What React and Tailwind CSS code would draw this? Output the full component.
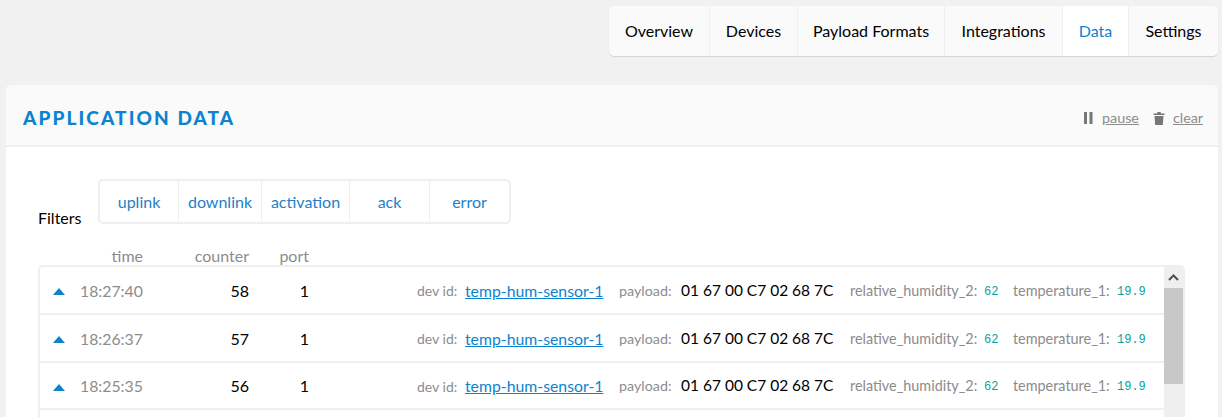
const tabs = [["Overview", "w-[101px]"], ["Devices", "w-[88px]"], ["Payload Formats", "w-[147px]"], ["Integrations", "w-[118px]"], ["Data", "w-[66px]"], ["Settings", "w-[89px]"]];
const filters = [["uplink", "w-[79px]"], ["downlink", "w-[83px]"], ["activation", "w-[88px]"], ["ack", "w-[80px]"], ["error", "flex-1"]];
const rows = [["18:27:40", "58"], ["18:26:37", "57"], ["18:25:35", "56"]];

function Row({ time, counter, h }) {
  return (
    <div className={`flex items-center border-b-2 border-[#efefef] pt-[1px] ${h}`}>
      <svg width="12" height="7" viewBox="0 0 12 7" className="ml-[13px] mr-[15px] mt-[2px] shrink-0">
        <path d="M6 0 L12 7 L0 7 Z" fill="#0d83d0" />
      </svg>
      <span className="w-[75px] text-[15.8px] text-[#8c8c8c]">{time}</span>
      <span className="w-[94px] text-right text-[16px] text-black">{counter}</span>
      <span className="w-[60px] text-right text-[16px] text-black">1</span>
      <div className="ml-[108px] flex items-center whitespace-nowrap">
        <span className="w-[48px] text-[14px] text-[#8c8c8c]">dev id:</span>
        <a className="w-[154px] text-[15.8px] text-[#0d83d0] underline">temp-hum-sensor-1</a>
        <span className="w-[62px] text-[14.3px] text-[#8c8c8c]">payload:</span>
        <span className="w-[169px] text-[15.5px] text-black">01 67 00 C7 02 68 7C</span>
        <span className="w-[134px] text-[14.4px] text-[#8c8c8c]">relative_humidity_2:</span>
        <span className="w-[29px] pt-[2px] font-['Liberation_Mono',monospace] text-[12px] text-[#0a9f9f]">62</span>
        <span className="w-[104px] text-[14.4px] text-[#8c8c8c]">temperature_1:</span>
        <span className="pt-[2px] font-['Liberation_Mono',monospace] text-[12px] text-[#0a9f9f]">19.9</span>
      </div>
    </div>
  );
}

export default function App() {
  return (
    <div className="h-[417px] overflow-hidden bg-[#f1f1f1] font-['Lato',sans-serif]">
      <div className="flex justify-end pt-[6px] pr-[4px]">
        <div className="flex h-[50px] overflow-hidden rounded-[5px] bg-[#fafafa] shadow-[0_1px_1px_rgba(0,0,0,0.12)]">
          {tabs.map(([t, w], i) => (
            <div key={t} className={`flex items-center justify-center text-[16px] ${w} ${i < 5 ? "border-r border-[#efefef]" : ""} ${t === "Data" ? "bg-white text-[#0d83d0]" : "text-black"}`}>{t}</div>
          ))}
        </div>
      </div>
      <div className="ml-[6px] mr-[4px] mt-[29px] rounded-t-[5px] bg-white pb-4">
        <div className="flex h-[62px] items-center justify-between rounded-t-[5px] border-b-2 border-[#efefef] bg-[#fafafa] pl-[17px] pr-[15px] pt-[6px]">
          <h1 className="text-[19px] font-black tracking-[2.1px] text-[#0d83d0]">APPLICATION DATA</h1>
          <div className="flex items-center text-[14.3px] text-[#8c8c8c]">
            <svg width="9" height="12" viewBox="0 0 9 12" className="mr-[9px]"><rect x="0" y="0" width="3" height="12" fill="#777" /><rect x="5.5" y="0" width="3" height="12" fill="#777" /></svg>
            <a className="underline">pause</a>
            <svg width="12" height="13" viewBox="0 0 12 13" className="ml-[14px] mr-[8px]"><path d="M4.5 0h3l.5 1.5h3.5V3H.5V1.5H4zM1.5 4h9l-.7 9H2.2z" fill="#777" /></svg>
            <a className="underline">clear</a>
          </div>
        </div>
        <div className="pl-[32px] pr-[33px]">
          <div className="flex items-end pt-[32px]">
            <span className="w-[60px] text-[16px] leading-[12px] text-black">Filters</span>
            <div className="flex h-[45px] w-[413px] rounded-[5px] border-2 border-[#efefef]">
              {filters.map(([f, w], i) => (
                <div key={f} className={`flex items-center justify-center text-[16px] text-[#1f7fc7] ${w} ${i < 4 ? "border-r border-[#efefef]" : ""}`}>{f}</div>
              ))}
            </div>
          </div>
          <div className="flex h-[41px] items-end text-[16px] leading-[18px] text-[#8c8c8c]">
            <span className="w-[105px] text-right">time</span>
            <span className="w-[106px] text-right">counter</span>
            <span className="w-[60px] text-right">port</span>
          </div>
          <div className="flex h-[160px] rounded-t-[5px] border-x-2 border-t-2 border-[#efefef]">
            <div className="min-w-0 flex-1">
              {rows.map(([t, c], i) => (
                <Row key={t} time={t} counter={c} h={i === 2 ? "h-[47px]" : "h-[48px]"} />
              ))}
            </div>
            <div className="flex w-[19px] shrink-0 flex-col bg-[#efefef]">
              <div className="flex h-[21px] items-center justify-center">
                <svg width="11" height="7" viewBox="0 0 11 7"><path d="M1 6 L5.5 1.5 L10 6" fill="none" stroke="#505050" strokeWidth="2" /></svg>
              </div>
              <div className="h-[96px] bg-[#c8c8c8]" />
            </div>
          </div>
        </div>
      </div>
    </div>
  );
}
